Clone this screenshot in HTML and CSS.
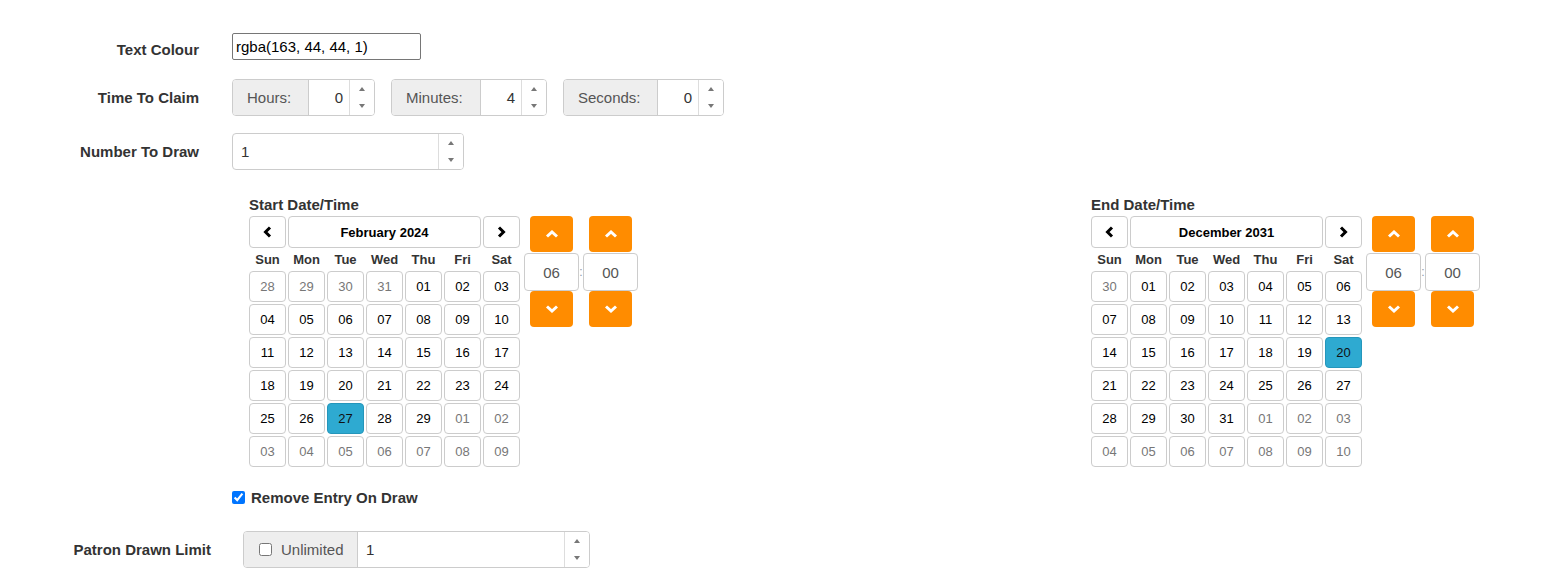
FILE: index.html
```html
<!DOCTYPE html>
<html>
<head>
<meta charset="utf-8">
<link rel="stylesheet" href="styles.css">
</head>
<body>
<div class="page">
  <div class="row row-colour">
    <label class="lbl lbl-top">Text Colour</label>
    <div class="ctl"><input class="colour-input" type="text" value="rgba(163, 44, 44, 1)"></div>
  </div>

  <div class="row row-claim">
    <label class="lbl">Time To Claim</label>
    <div class="ctl groups">
      <div class="igroup">
        <span class="addon addon-hours">Hours:</span>
        <span class="ival ival-right">0</span>
        <span class="spin"><span class="half"><i class="tri-up"></i></span><span class="half"><i class="tri-down"></i></span></span>
      </div>
      <div class="igroup">
        <span class="addon addon-min">Minutes:</span>
        <span class="ival ival-right">4</span>
        <span class="spin"><span class="half"><i class="tri-up"></i></span><span class="half"><i class="tri-down"></i></span></span>
      </div>
      <div class="igroup">
        <span class="addon addon-sec">Seconds:</span>
        <span class="ival ival-right">0</span>
        <span class="spin"><span class="half"><i class="tri-up"></i></span><span class="half"><i class="tri-down"></i></span></span>
      </div>
    </div>
  </div>

  <div class="row row-draw">
    <label class="lbl">Number To Draw</label>
    <div class="ctl">
      <div class="igroup">
        <span class="ival ival-left ival-draw">1</span>
        <span class="spin"><span class="half"><i class="tri-up"></i></span><span class="half"><i class="tri-down"></i></span></span>
      </div>
    </div>
  </div>

  <div class="dates">
    <div class="dt dt-start">
      <div class="dt-label">Start Date/Time</div>
      <div class="dt-body">
        <div class="cal">
          <button class="cal-nav"><svg width="9" height="12" viewBox="0 0 9 12"><polyline points="7,1.5 2.5,6 7,10.5" fill="none" stroke="#000" stroke-width="3"/></svg></button>
          <button class="cal-title">February 2024</button>
          <button class="cal-nav"><svg width="9" height="12" viewBox="0 0 9 12"><polyline points="2,1.5 6.5,6 2,10.5" fill="none" stroke="#000" stroke-width="3"/></svg></button>
          <span class="dow">Sun</span><span class="dow">Mon</span><span class="dow">Tue</span><span class="dow">Wed</span><span class="dow">Thu</span><span class="dow">Fri</span><span class="dow">Sat</span>
          <span class="day muted">28</span><span class="day muted">29</span><span class="day muted">30</span><span class="day muted">31</span><span class="day">01</span><span class="day">02</span><span class="day">03</span>
          <span class="day">04</span><span class="day">05</span><span class="day">06</span><span class="day">07</span><span class="day">08</span><span class="day">09</span><span class="day">10</span>
          <span class="day">11</span><span class="day">12</span><span class="day">13</span><span class="day">14</span><span class="day">15</span><span class="day">16</span><span class="day">17</span>
          <span class="day">18</span><span class="day">19</span><span class="day">20</span><span class="day">21</span><span class="day">22</span><span class="day">23</span><span class="day">24</span>
          <span class="day">25</span><span class="day">26</span><span class="day sel">27</span><span class="day">28</span><span class="day">29</span><span class="day muted">01</span><span class="day muted">02</span>
          <span class="day muted">03</span><span class="day muted">04</span><span class="day muted">05</span><span class="day muted">06</span><span class="day muted">07</span><span class="day muted">08</span><span class="day muted">09</span>
        </div>
        <div class="tp">
          <div class="tp-col">
            <button class="tp-btn"><svg width="14" height="8" viewBox="0 0 14 8"><polyline points="2,6.5 7,2 12,6.5" fill="none" stroke="#fff" stroke-width="3"/></svg></button>
            <div class="tp-val">06</div>
            <button class="tp-btn"><svg width="14" height="8" viewBox="0 0 14 8"><polyline points="2,1.5 7,6 12,1.5" fill="none" stroke="#fff" stroke-width="3"/></svg></button>
          </div>
          <div class="tp-sep">:</div>
          <div class="tp-col">
            <button class="tp-btn"><svg width="14" height="8" viewBox="0 0 14 8"><polyline points="2,6.5 7,2 12,6.5" fill="none" stroke="#fff" stroke-width="3"/></svg></button>
            <div class="tp-val">00</div>
            <button class="tp-btn"><svg width="14" height="8" viewBox="0 0 14 8"><polyline points="2,1.5 7,6 12,1.5" fill="none" stroke="#fff" stroke-width="3"/></svg></button>
          </div>
        </div>
      </div>
    </div>

    <div class="dt">
      <div class="dt-label">End Date/Time</div>
      <div class="dt-body">
        <div class="cal">
          <button class="cal-nav"><svg width="9" height="12" viewBox="0 0 9 12"><polyline points="7,1.5 2.5,6 7,10.5" fill="none" stroke="#000" stroke-width="3"/></svg></button>
          <button class="cal-title">December 2031</button>
          <button class="cal-nav"><svg width="9" height="12" viewBox="0 0 9 12"><polyline points="2,1.5 6.5,6 2,10.5" fill="none" stroke="#000" stroke-width="3"/></svg></button>
          <span class="dow">Sun</span><span class="dow">Mon</span><span class="dow">Tue</span><span class="dow">Wed</span><span class="dow">Thu</span><span class="dow">Fri</span><span class="dow">Sat</span>
          <span class="day muted">30</span><span class="day">01</span><span class="day">02</span><span class="day">03</span><span class="day">04</span><span class="day">05</span><span class="day">06</span>
          <span class="day">07</span><span class="day">08</span><span class="day">09</span><span class="day">10</span><span class="day">11</span><span class="day">12</span><span class="day">13</span>
          <span class="day">14</span><span class="day">15</span><span class="day">16</span><span class="day">17</span><span class="day">18</span><span class="day">19</span><span class="day sel">20</span>
          <span class="day">21</span><span class="day">22</span><span class="day">23</span><span class="day">24</span><span class="day">25</span><span class="day">26</span><span class="day">27</span>
          <span class="day">28</span><span class="day">29</span><span class="day">30</span><span class="day">31</span><span class="day muted">01</span><span class="day muted">02</span><span class="day muted">03</span>
          <span class="day muted">04</span><span class="day muted">05</span><span class="day muted">06</span><span class="day muted">07</span><span class="day muted">08</span><span class="day muted">09</span><span class="day muted">10</span>
        </div>
        <div class="tp">
          <div class="tp-col">
            <button class="tp-btn"><svg width="14" height="8" viewBox="0 0 14 8"><polyline points="2,6.5 7,2 12,6.5" fill="none" stroke="#fff" stroke-width="3"/></svg></button>
            <div class="tp-val">06</div>
            <button class="tp-btn"><svg width="14" height="8" viewBox="0 0 14 8"><polyline points="2,1.5 7,6 12,1.5" fill="none" stroke="#fff" stroke-width="3"/></svg></button>
          </div>
          <div class="tp-sep">:</div>
          <div class="tp-col">
            <button class="tp-btn"><svg width="14" height="8" viewBox="0 0 14 8"><polyline points="2,6.5 7,2 12,6.5" fill="none" stroke="#fff" stroke-width="3"/></svg></button>
            <div class="tp-val">00</div>
            <button class="tp-btn"><svg width="14" height="8" viewBox="0 0 14 8"><polyline points="2,1.5 7,6 12,1.5" fill="none" stroke="#fff" stroke-width="3"/></svg></button>
          </div>
        </div>
      </div>
    </div>
  </div>

  <div class="check-row">
    <input type="checkbox" class="cb" checked>
    <span class="check-text">Remove Entry On Draw</span>
  </div>

  <div class="row row-patron">
    <label class="lbl lbl-patron">Patron Drawn Limit</label>
    <div class="ctl ctl-patron">
      <div class="igroup">
        <span class="addon addon-unl"><input type="checkbox" class="cb"><span>Unlimited</span></span>
        <span class="ival ival-left ival-patron">1</span>
        <span class="spin"><span class="half"><i class="tri-up"></i></span><span class="half"><i class="tri-down"></i></span></span>
      </div>
    </div>
  </div>
</div>
</body>
</html>
```

FILE: styles.css
```css
* { box-sizing: border-box; }
html, body { margin: 0; padding: 0; background: #fff; }
body {
  font-family: "Liberation Sans", Arial, sans-serif;
  font-size: 15px;
  color: #333;
}
.page { padding-top: 33px; }

.row { display: flex; }
.lbl {
  width: 199px;
  text-align: right;
  font-weight: bold;
  line-height: 20px;
  color: #333;
  flex: none;
}
.lbl-top { padding-top: 7px; }
.ctl { margin-left: 33px; }

.row-colour { align-items: flex-start; }
.row-claim { margin-top: 19px; align-items: center; }
.row-draw { margin-top: 17px; align-items: center; }

.colour-input {
  display: block;
  width: 189px;
  height: 27px;
  margin: 0;
  border: 1px solid #767676;
  border-radius: 2px;
  padding: 0 3px;
  font-family: "Liberation Sans", Arial, sans-serif;
  font-size: 15px;
  color: #000;
  background: #fff;
}

.groups { display: flex; gap: 16px; }
.igroup {
  display: flex;
  height: 37px;
  border: 1px solid #ccc;
  border-radius: 4px;
  overflow: hidden;
  background: #fff;
}
.addon {
  display: flex;
  align-items: center;
  background: #eee;
  color: #555;
  padding: 0 0 0 14px;
  border-right: 1px solid #ccc;
}
.addon-hours { width: 76px; }
.addon-min { width: 89px; }
.addon-sec { width: 94px; }
.ival {
  display: flex;
  align-items: center;
  color: #333;
  font-size: 15px;
}
.ival-right { width: 40px; justify-content: flex-end; padding-right: 6px; }
.ival-left { padding-left: 8px; }
.ival-draw { width: 205px; }
.spin {
  width: 25px;
  display: flex;
  flex-direction: column;
  border-left: 1px solid #ddd;
  background: #fff;
}
.half { flex: 1; display: flex; align-items: center; justify-content: center; }
.tri-up, .tri-down { display: block; width: 0; height: 0; border-left: 3.5px solid transparent; border-right: 3.5px solid transparent; }
.tri-up { border-bottom: 4px solid #777; }
.tri-down { border-top: 4px solid #777; }

.dates { display: flex; padding-left: 249px; margin-top: 25px; }
.dt { flex: none; }
.dt-start { width: 842px; }
.dt-label { font-weight: bold; line-height: 20px; margin-bottom: 1px; color: #333; }
.dt-body { display: flex; align-items: flex-start; }

.cal {
  display: grid;
  grid-template-columns: repeat(7, 37px);
  grid-template-rows: 32px 19px repeat(6, 31px);
  column-gap: 2px;
  row-gap: 2px;
}
.cal-nav, .cal-title {
  margin: 0;
  padding: 0;
  border: 1px solid #ccc;
  border-radius: 4px;
  background: #fff;
  display: flex;
  align-items: center;
  justify-content: center;
  font-family: "Liberation Sans", Arial, sans-serif;
  font-weight: bold;
  font-size: 13px;
  color: #000;
}
.cal-title { grid-column: 2 / 7; }
.dow {
  display: flex;
  align-items: center;
  justify-content: center;
  font-weight: bold;
  font-size: 13px;
  color: #333;
}
.day {
  display: flex;
  align-items: center;
  justify-content: center;
  border: 1px solid #ccc;
  border-radius: 4px;
  background: #fff;
  font-size: 13px;
  color: #000;
}
.day.muted { color: #777; }
.day.sel { background: #2eaad1; border-color: #2596bb; color: #111; }

.tp { display: flex; margin-left: 4px; }
.tp-col { width: 55px; display: flex; flex-direction: column; align-items: center; }
.tp-btn {
  width: 43px;
  height: 36px;
  margin: 0;
  padding: 0;
  border: none;
  border-radius: 4px;
  background: #ff8c00;
  display: flex;
  align-items: center;
  justify-content: center;
}
.tp-val {
  width: 55px;
  height: 38px;
  margin-top: 1px;
  border: 1px solid #ccc;
  border-radius: 4px;
  display: flex;
  align-items: center;
  justify-content: center;
  color: #555;
  font-size: 15px;
}
.tp-sep {
  width: 4px;
  height: 38px;
  margin-top: 37px;
  display: flex;
  align-items: center;
  justify-content: center;
  font-size: 12px;
  color: #8a9aa8;
}

.check-row {
  display: flex;
  align-items: center;
  height: 20px;
  margin-top: 20px;
  padding-left: 232px;
  gap: 6px;
}
.cb { width: 13px; height: 13px; margin: 0; flex: none; }
.check-text { font-weight: bold; color: #333; }

.row-patron { margin-top: 24px; align-items: center; }
.lbl-patron { width: 211px; }
.ctl-patron { margin-left: 32px; }
.addon-unl { width: 114px; padding: 0 0 0 15px; gap: 9px; }
.ival-patron { width: 206px; }
```
